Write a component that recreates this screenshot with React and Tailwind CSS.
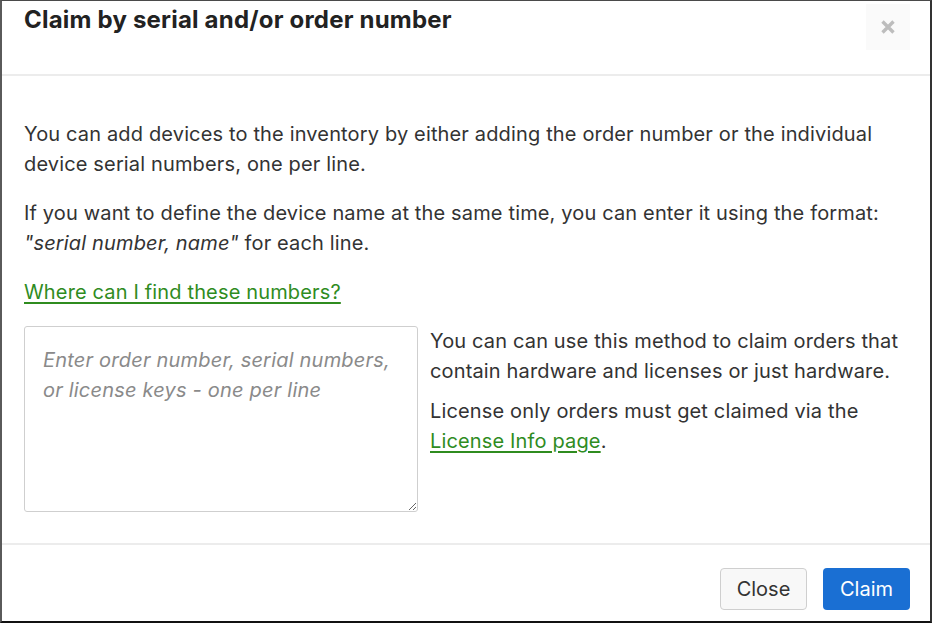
import React from 'react';

const font = { fontFamily: 'Inter, "Noto Sans", sans-serif' };

function CloseIcon() {
  return (
    <svg width="16" height="16" viewBox="0 0 16 16" fill="none">
      <path d="M2.5 2.5 L13.5 13.5 M13.5 2.5 L2.5 13.5" stroke="#bdbdbd" strokeWidth="3.4" strokeLinecap="butt" />
    </svg>
  );
}

function App() {
  return (
    <div
      className="w-[932px] h-[623px] bg-white flex flex-col border-t border-l-2 border-r-2 border-b-2 border-t-[#4a4a4a] border-l-[#5a5a5a] border-r-[#333] border-b-[#111] text-[#333]"
      style={font}
    >
      {/* Header */}
      <header className="h-[75px] shrink-0 flex items-start justify-between pl-[22px] pr-[20px] border-b-2 border-[#ececec]">
        <h1 className="text-[24px] leading-[32px] font-bold text-[#222] pt-[3px] tracking-[0.2px]">
          Claim by serial and/or order number
        </h1>
        <button className="w-[44px] h-[46px] mt-[3px] bg-[#fafafa] flex items-center justify-center">
          <CloseIcon />
        </button>
      </header>

      {/* Body */}
      <main className="flex-1 pl-[22px] pr-[16px] pt-[43px] text-[20px] leading-[30px] tracking-[0.15px]">
        <p>
          You can add devices to the inventory by either adding the order number or the individual
          device serial numbers, one per line.
        </p>
        <p className="mt-[19px]">
          If you want to define the device name at the same time, you can enter it using the format:{' '}
          <em>"serial number, name"</em> for each line.
        </p>
        <p className="mt-[19px]">
          <a href="#" className="text-[#2f8c1f] underline underline-offset-[3px]">
            Where can I find these numbers?
          </a>
        </p>
        <div className="mt-[19px] flex gap-[12px]">
          <textarea
            className="w-[394px] h-[186px] shrink-0 border border-[#cfcfcf] rounded-[3px] pl-[18px] pr-[14px] pt-[18px] text-[20px] leading-[30px] tracking-[0.2px] placeholder:italic placeholder:text-[#8a8a8a] outline-none resize"
            style={font}
            placeholder="Enter order number, serial numbers, or license keys - one per line"
          />
          <div className="pr-[6px]">
            <p>
              You can can use this method to claim orders that contain hardware and licenses or just
              hardware.
            </p>
            <p className="mt-[10px]">
              License only orders must get claimed via the{' '}
              <a href="#" className="text-[#2f8c1f] underline underline-offset-[3px]">
                License Info page
              </a>
              .
            </p>
          </div>
        </div>
      </main>

      {/* Footer */}
      <footer className="h-[78px] shrink-0 border-t-2 border-[#ececec] flex items-start justify-end gap-[16px] pr-[20px] pt-[23px]">
        <button className="w-[87px] h-[42px] rounded-[4px] border border-[#cfcfcf] bg-[#f8f8f8] text-[20px] text-[#333]">
          Close
        </button>
        <button className="w-[87px] h-[42px] rounded-[4px] bg-[#1a6fd3] text-[20px] text-white">
          Claim
        </button>
      </footer>
    </div>
  );
}

export default App;
